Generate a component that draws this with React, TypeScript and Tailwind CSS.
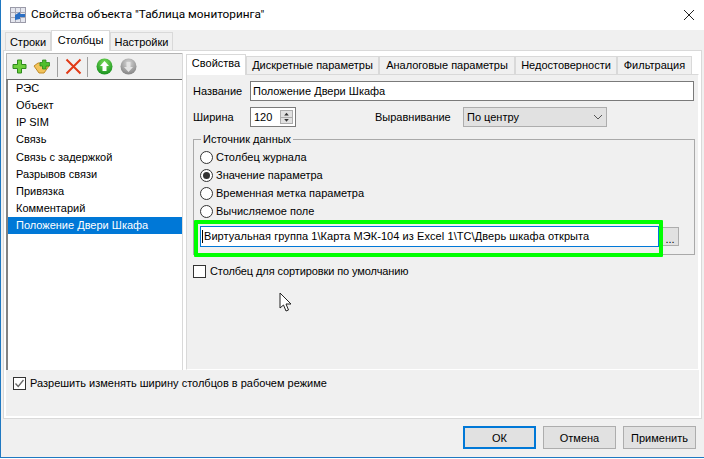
const items = ["РЭС","Объект","IP SIM","Связь","Связь с задержкой","Разрывов связи","Привязка","Комментарий","Положение Двери Шкафа"];

function Radio({ checked, label }: { checked?: boolean; label: string }) {
  return (
    <div className="flex h-[18px] items-center gap-[3px]">
      <span className="flex h-[13px] w-[13px] items-center justify-center rounded-full border border-[#333] bg-white">
        {checked && <span className="h-[7px] w-[7px] rounded-full bg-[#333]" />}
      </span>
      <span>{label}</span>
    </div>
  );
}

function Check({ checked, label, tracking }: { checked?: boolean; label: string; tracking?: string }) {
  return (
    <div className="flex items-center gap-[4px]">
      <span className="flex h-[13px] w-[13px] items-center justify-center border border-[#333] bg-white">
        {checked && (
          <svg width="11" height="11" viewBox="0 0 11 11"><path d="M1.5 5.5 L4.2 8.5 L9.5 2" fill="none" stroke="#666" strokeWidth="1.3" /></svg>
        )}
      </span>
      <span className={tracking ?? ""}>{label}</span>
    </div>
  );
}

function Tab({ label, w, active, low }: { label: string; w: string; active?: boolean; low?: boolean }) {
  return (
    <div className={`flex items-center justify-center border border-b-0 border-[#d9d9d9] ${w} ${active ? "relative z-10 -mb-px h-[21px] bg-white" : "h-[18px] bg-[#f0f0f0]"}`}>
      <span className={active ? (low ? "-mt-[2px]" : "-mt-[3px]") : low ? "mt-[1px]" : ""}>{label}</span>
    </div>
  );
}

function CircleBtn({ up }: { up?: boolean }) {
  const id = up ? "gu" : "gd";
  const c1 = up ? "#7ee05a" : "#d8d8d8";
  const c2 = up ? "#0f8a1a" : "#7e7e7e";
  return (
    <svg className="block" width="17" height="17" viewBox="0 0 17 17">
      <defs>
        <radialGradient id={id} cx="50%" cy="30%" r="75%">
          <stop offset="0%" stopColor={c1} />
          <stop offset="100%" stopColor={c2} />
        </radialGradient>
      </defs>
      <circle cx="8.5" cy="8.5" r="8" fill={`url(#${id})`} />
      <path d={up ? "M8.5 3 L13 8 H10.5 V13 H6.5 V8 H4 Z" : "M8.5 14 L13 9 H10.5 V4 H6.5 V9 H4 Z"} fill={up ? "#fff" : "#e4e4e4"} />
    </svg>
  );
}

function Plus() {
  return (
    <svg className="block" width="15" height="15" viewBox="0 0 15 15">
      <path d="M5.5 1 H9.5 V5.5 H14 V9.5 H9.5 V14 H5.5 V9.5 H1 V5.5 H5.5 Z" fill="#6ccf3c" stroke="#2e8a1c" strokeWidth="1" strokeLinejoin="round" />
    </svg>
  );
}

function FolderPlus() {
  return (
    <svg className="block" width="18" height="16" viewBox="0 0 18 16">
      <path d="M1 7 L5 4 H9 L12 7 H16 L11 14 H6 Z" fill="#f2c35a" stroke="#c08a28" strokeWidth="1" />
      <path d="M9.5 1 H13 V3.5 H16.5 V7 H13 V10 H9.5 V7 H7 V3.5 H9.5 Z" fill="#4fbf2c" stroke="#2a8a1a" strokeWidth="0.8" />
    </svg>
  );
}

function TitleIcon() {
  return (
    <svg className="block" width="16" height="16" viewBox="0 0 16 16">
      <rect x="0.5" y="0.5" width="15" height="15" fill="#e4e6ee" stroke="#9a9aa8" />
      <path d="M5.5 0.5 V15.5 M10.5 0.5 V15.5 M0.5 5.5 H15.5 M0.5 10.5 H15.5" stroke="#a8a8b4" />
      <path d="M5 8 L10 5 V7 H15 V10 H10 V12 L5 13 Z" fill="#2a6fc4" />
    </svg>
  );
}

function Btn({ label, primary }: { label: string; primary?: boolean }) {
  return (
    <div className={`flex h-[23px] w-[73px] items-center justify-center bg-[#e1e1e1] pt-px ${primary ? "border-2 border-[#0078d7]" : "border border-[#adadad]"}`}>{label}</div>
  );
}

export default function App() {
  return (
    <div className="h-[459px] w-[704px] overflow-hidden bg-white text-[11px] leading-[13px] text-black [font-family:'Liberation_Sans',sans-serif]">
      <div className="flex h-[458px] flex-col border-b border-l border-[#1f78c1] bg-[#f0f0f0]">
        <div className="flex h-[30px] shrink-0 items-center bg-white pl-[9px] pr-[9px]">
          <TitleIcon />
          <span className="ml-[5px] -mt-[2px] text-[11.8px] [font-family:Roboto,sans-serif]">Свойства объекта "Таблица мониторинга"</span>
          <svg className="ml-auto" width="12" height="12" viewBox="0 0 12 12"><path d="M1 1 L11 11 M11 1 L1 11" stroke="#222" strokeWidth="1" /></svg>
        </div>

        <div className="flex h-[20px] shrink-0 items-end pl-[4px]">
          <Tab label="Строки" w="w-[46px]" low />
          <Tab label="Столбцы" w="w-[59px]" active low />
          <Tab label="Настройки" w="w-[63px]" low />
        </div>

        <div className="ml-[2px] mr-[2px] flex h-[369px] shrink-0 flex-col border border-[#d9d9d9] bg-white p-[2px]">
          <div className="flex min-h-0 flex-1 gap-[3px] bg-white">
            <div className="flex w-[177px] shrink-0 flex-col border-r border-[#d9d9d9] bg-[#f0f0f0]">
              <div className="flex h-[26px] shrink-0 items-center border-l border-t border-[#b4b4b4] pl-[5px]">
                <Plus />
                <span className="ml-[6px]"><FolderPlus /></span>
                <span className="ml-[6px] h-[20px] w-px bg-[#a0a0a0]" />
                <svg className="ml-[7px]" width="17" height="17" viewBox="0 0 17 17"><path d="M1.5 1.5 L15.5 15.5 M15.5 1.5 L1.5 15.5" stroke="#e23a17" strokeWidth="2" /></svg>
                <span className="ml-[5px] h-[20px] w-px bg-[#a0a0a0]" />
                <span className="ml-[8px]"><CircleBtn up /></span>
                <span className="ml-[7px]"><CircleBtn /></span>
              </div>
              <div className="flex-1 border-l-2 border-t border-l-[#828282] border-t-[#696969] bg-white">
                {items.map((t, i) => (
                  <div key={t} className={`flex h-[17.125px] items-center pl-[8px] ${i === 8 ? "bg-[#0078d7] text-white" : ""}`}>{t}</div>
                ))}
              </div>
            </div>

            <div className="flex min-w-0 flex-1 flex-col pt-[1px]">
              <div className="flex h-[20px] shrink-0 items-end">
                <Tab label="Свойства" w="w-[60px]" active />
                <Tab label="Дискретные параметры" w="w-[133px]" />
                <Tab label="Аналоговые параметры" w="w-[136px]" />
                <Tab label="Недостоверности" w="w-[102px]" />
                <Tab label="Фильтрация" w="w-[75px]" />
              </div>
              <div className="flex flex-1 flex-col border border-[#d9d9d9] border-r-white border-b-white bg-[#f0f0f0] pl-[6px] pr-[4px] pt-[6px]">
                <div className="flex h-[20px] items-center">
                  <span className="mt-[1px] w-[57px]">Название</span>
                  <div className="flex h-[20px] flex-1 items-center border border-[#7a7a7a] bg-white pl-[2px]">Положение Двери Шкафа</div>
                </div>
                <div className="mt-[6px] flex h-[20px] items-center">
                  <span className="mt-[1px] w-[57px]">Ширина</span>
                  <div className="flex h-[20px] w-[46px] items-center border border-[#7a7a7a] bg-white pl-[3px]">
                    <span className="flex-1">120</span>
                    <div className="mr-[2px] flex h-[14px] w-[13px] flex-col border border-[#adadad] bg-[#e1e1e1]">
                      <svg className="flex-1" viewBox="0 0 11 6"><path d="M3 5 H8 L5.5 2 Z" fill="#333" /></svg>
                      <svg className="flex-1 border-t border-[#adadad]" viewBox="0 0 11 6"><path d="M3 1 H8 L5.5 4 Z" fill="#333" /></svg>
                    </div>
                  </div>
                  <span className="ml-[79px] mt-[1px] w-[88px]">Выравнивание</span>
                  <div className="flex h-[20px] w-[144px] items-center justify-between border border-[#adadad] bg-[#e1e1e1] pl-[3px] pr-[3px]">
                    <span className="mt-[1px]">По центру</span>
                    <svg width="10" height="6" viewBox="0 0 10 6"><path d="M1 1 L5 5 L9 1" fill="none" stroke="#555" /></svg>
                  </div>
                </div>

                <fieldset className="relative -mr-px mt-[6px] h-[122px] border border-[#a9a9a9] pl-[6px] pr-[14px]">
                  <legend className="ml-[1px] px-[2px]">Источник данных</legend>
                  <div className="mt-[2px]">
                    <Radio label="Столбец журнала" />
                    <Radio checked label="Значение параметра" />
                    <Radio label="Временная метка параметра" />
                    <Radio label="Вычисляемое поле" />
                  </div>
                  <div className="mt-[6px] flex items-center">
                    <div className="flex h-[21px] w-[459px] items-center border border-[#0078d7] bg-white pl-[1px]">
                      <span className="mr-px h-[13px] w-px bg-black" />
                      <span className="tracking-[0.07px]">Виртуальная группа 1\Карта МЭК-104 из Excel 1\ТС\Дверь шкафа открыта</span>
                    </div>
                    <div className="ml-[2px] flex h-[19px] w-[18px] items-end justify-center border border-[#adadad] bg-[#e1e1e1] pb-[1px] leading-[10px]">...</div>
                  </div>
                  <div className="pointer-events-none absolute left-[0px] top-[74px] h-[37px] w-[469px] rounded-[1px] border-[4px] border-[#00ff00]" />
                </fieldset>

                <div className="mt-[10px]"><Check label="Столбец для сортировки по умолчанию" tracking="tracking-[-0.1px]" /></div>

                <svg className="ml-[86px] mt-[14px]" width="13" height="21" viewBox="0 0 13 21">
                  <path d="M1 1 V16 L4.5 13 L7 19 L9.5 18 L7 12 H12 Z" fill="#fff" stroke="#222" strokeWidth="1" strokeLinejoin="round" />
                </svg>
              </div>
            </div>
          </div>
          <div className="flex h-[46px] shrink-0 flex-col bg-[#f0f0f0] pl-[7px] pt-[7px]">
            <Check checked label="Разрешить изменять ширину столбцов в рабочем режиме" />
          </div>
        </div>

        <div className="flex flex-1 items-start justify-end gap-[7px] pr-[8px] pt-[7px]">
          <Btn label="ОК" primary />
          <Btn label="Отмена" />
          <Btn label="Применить" />
        </div>
      </div>
    </div>
  );
}
